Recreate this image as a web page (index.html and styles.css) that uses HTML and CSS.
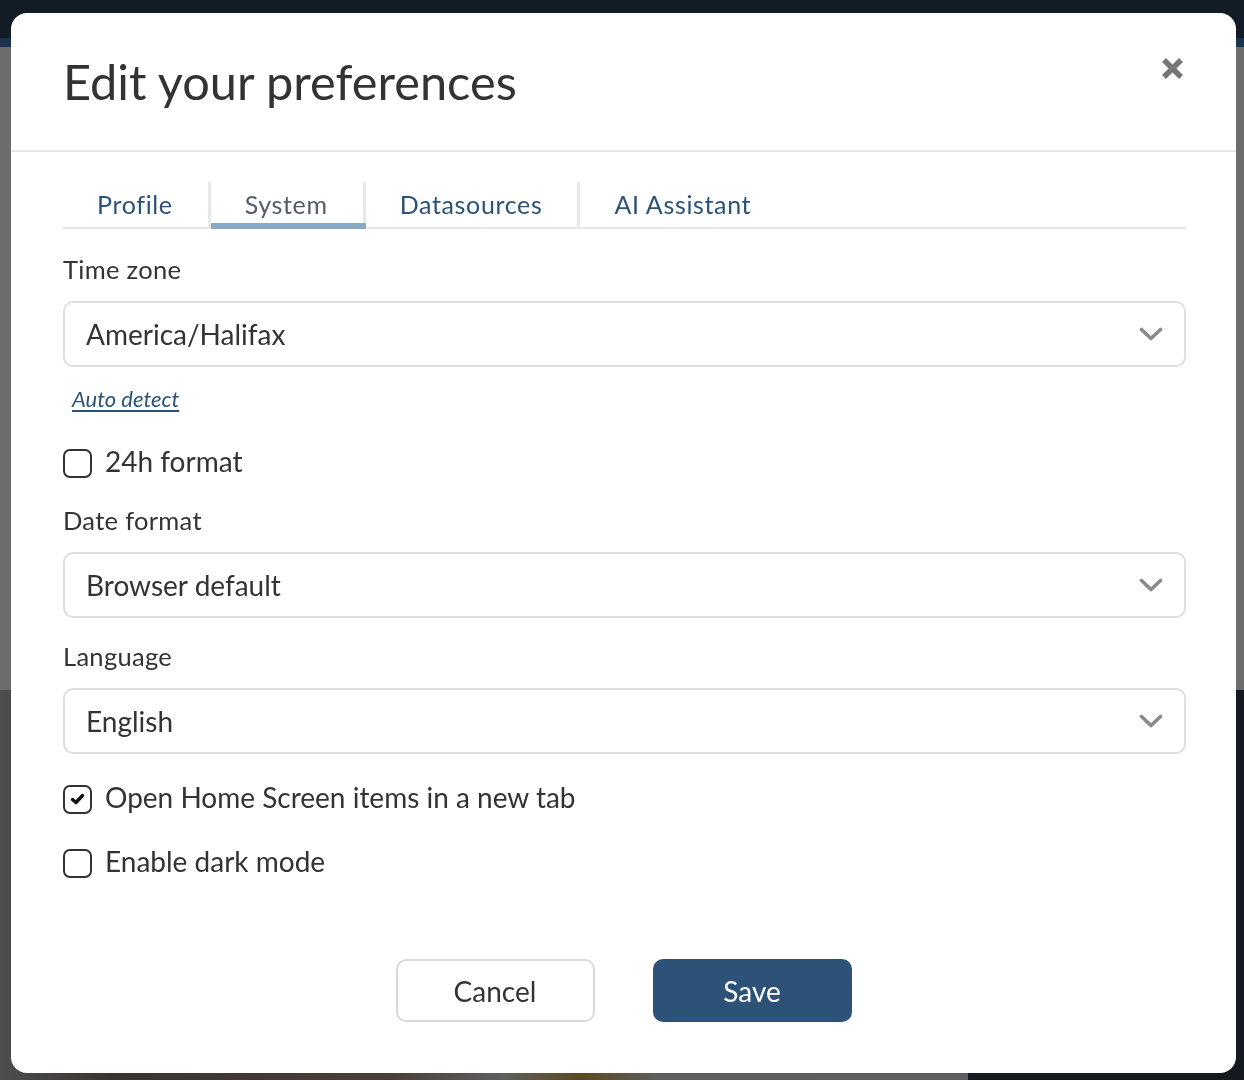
FILE: index.html
```html
<!DOCTYPE html>
<html lang="en">
<head>
<meta charset="utf-8">
<title>Edit your preferences</title>
<link rel="stylesheet" href="styles.css">
</head>
<body>
<div class="backdrop">
  <div class="bg-topbar"></div>
  <div class="bg-strip"></div>
  <div class="bg-main"></div>
  <div class="bg-bottom-left"></div>
  <div class="bg-bottom-right"></div>
</div>

<div class="modal" role="dialog" aria-labelledby="dlg-title">
  <header class="modal-header">
    <h1 id="dlg-title" class="modal-title">Edit your preferences</h1>
    <button class="close-btn" aria-label="Close">
      <svg width="23" height="23" viewBox="0 0 23 23"><path d="M3 3 L20 20 M20 3 L3 20" stroke="#767676" stroke-width="5.5" stroke-linecap="butt" fill="none"/></svg>
    </button>
  </header>

  <div class="modal-body">
    <nav class="tabs">
      <span class="tab">Profile</span>
      <span class="tab tab-active">System</span>
      <span class="tab">Datasources</span>
      <span class="tab tab-last">AI Assistant</span>
    </nav>

    <div class="field field-first">
      <div class="field-label">Time zone</div>
      <div class="select">
        <span class="select-value">America/Halifax</span>
        <svg class="chevron" width="24" height="15" viewBox="0 0 24 15"><path d="M2.5 2.5 L12 11.5 L21.5 2.5" stroke="#8a8a8a" stroke-width="3.6" fill="none" stroke-linecap="round" stroke-linejoin="round"/></svg>
      </div>
      <a class="link" href="#">Auto detect</a>
    </div>

    <label class="check-row check-24h">
      <span class="check-box"></span>
      <span class="check-label">24h format</span>
    </label>

    <div class="field field-date">
      <div class="field-label">Date format</div>
      <div class="select">
        <span class="select-value">Browser default</span>
        <svg class="chevron" width="24" height="15" viewBox="0 0 24 15"><path d="M2.5 2.5 L12 11.5 L21.5 2.5" stroke="#8a8a8a" stroke-width="3.6" fill="none" stroke-linecap="round" stroke-linejoin="round"/></svg>
      </div>
    </div>

    <div class="field">
      <div class="field-label">Language</div>
      <div class="select">
        <span class="select-value">English</span>
        <svg class="chevron" width="24" height="15" viewBox="0 0 24 15"><path d="M2.5 2.5 L12 11.5 L21.5 2.5" stroke="#8a8a8a" stroke-width="3.6" fill="none" stroke-linecap="round" stroke-linejoin="round"/></svg>
      </div>
    </div>

    <label class="check-row check-newtab">
      <span class="check-box checked">
        <svg width="17" height="14" viewBox="0 0 17 14"><path d="M3.5 7.5 L7 10.5 L13.5 3.5" stroke="#111" stroke-width="3.4" fill="none" stroke-linecap="round" stroke-linejoin="round"/></svg>
      </span>
      <span class="check-label">Open Home Screen items in a new tab</span>
    </label>

    <label class="check-row check-dark">
      <span class="check-box"></span>
      <span class="check-label">Enable dark mode</span>
    </label>
  </div>

  <footer class="modal-footer">
    <button class="btn btn-secondary">Cancel</button>
    <button class="btn btn-primary">Save</button>
  </footer>
</div>
</body>
</html>
```

FILE: styles.css
```css
* { box-sizing: border-box; }

html, body {
  margin: 0;
  padding: 0;
  width: 1244px;
  height: 1080px;
  overflow: hidden;
  font-family: "Lato", "Liberation Sans", sans-serif;
}

/* dimmed application behind the dialog */
.backdrop {
  display: grid;
  grid-template-columns: 968px 1fr;
  grid-template-rows: 38px 9px 643px 1fr;
  width: 1244px;
  height: 1080px;
}
.bg-topbar { grid-column: 1 / 3; background: #111c27; }
.bg-strip { grid-column: 1 / 3; background: #1c3350; }
.bg-main { grid-column: 1 / 3; background: #6c6c6c; }
.bg-bottom-left { background: linear-gradient(90deg, #4d4d4d 0, #3a3330 12%, #4a3f38 40%, #5e5e5e 52%, #5a4a22 60%, #5e5e5e 68%, #5f5f5f 100%); }
.bg-bottom-right { background: #151a20; }

/* dialog */
.modal {
  position: fixed;
  left: 11px;
  top: 13px;
  width: 1225px;
  height: 1060px;
  background: #fff;
  border-radius: 16px;
  display: flex;
  flex-direction: column;
  color: #333;
}

.modal-header {
  display: flex;
  justify-content: space-between;
  align-items: flex-start;
  padding: 38px 52px 39px 52px;
  border-bottom: 2px solid #e6e6e6;
}
.modal-title {
  margin: 0;
  font-size: 48.7px;
  line-height: 60px;
  font-weight: 400;
  color: #333;
}
.close-btn {
  margin-top: 6px;
  padding: 0;
  border: 0;
  background: none;
  width: 23px;
  height: 23px;
  display: flex;
}

.modal-body {
  padding: 30px 50px 0 52px;
  display: flex;
  flex-direction: column;
}

/* tabs */
.tabs {
  display: flex;
  border-bottom: 2px solid #e8e8e8;
  height: 47px;
}
.tab {
  position: relative;
  padding: 0 35px 0 34px;
  font-size: 25px;
  letter-spacing: 0.65px;
  line-height: 45px;
  color: #2b5278;
  border-right: 3px solid #e8e8e8;
}
.tab-last { border-right: 0; }
.tab-active { color: #525c6a; }
.tab-active::after {
  content: "";
  position: absolute;
  left: 0;
  right: -3px;
  bottom: -2px;
  height: 6px;
  background: #8aa9c2;
}

/* fields */
.field { display: flex; flex-direction: column; margin-top: 23px; }
.field-first { margin-top: 25px; }
.field-date { margin-top: 27px; }
.field-label {
  font-size: 25.5px;
  letter-spacing: 0.3px;
  line-height: 30px;
  color: #333;
  margin-bottom: 17px;
}
.select {
  display: flex;
  align-items: center;
  justify-content: space-between;
  height: 66px;
  border: 2px solid #dcdfe3;
  border-radius: 10px;
  padding: 0 21px 0 21px;
}
.select-value {
  font-size: 28px;
  line-height: 62px;
  color: #333;
}
.chevron { margin-top: 1px; }

.link {
  align-self: flex-start;
  margin: 18px 0 0 9px;
  font-size: 22px;
  line-height: 28px;
  font-style: italic;
  color: #2b5278;
  text-decoration: underline;
  text-underline-offset: 3px;
}

/* checkboxes */
.check-row {
  display: flex;
  align-items: center;
  gap: 13px;
  height: 34px;
}
.check-24h { margin-top: 31px; }
.check-newtab { margin-top: 26px; }
.check-dark { margin-top: 30px; }
.check-box {
  width: 29px;
  height: 29px;
  flex: none;
  border: 2px solid #333;
  border-radius: 7px;
  margin-top: 4px;
  display: flex;
  align-items: center;
  justify-content: center;
}
.check-label {
  font-size: 28px;
  line-height: 34px;
  color: #333;
}

/* footer */
.modal-footer {
  margin-top: auto;
  display: flex;
  justify-content: center;
  gap: 58px;
  padding: 0 0 51px 0;
}
.btn {
  width: 199px;
  height: 63px;
  border-radius: 10px;
  font-family: "Lato", "Liberation Sans", sans-serif;
  font-size: 28px;
  padding: 0;
}
.btn-secondary {
  background: #fff;
  border: 2px solid #d6d9de;
  color: #333;
}
.btn-primary {
  background: #2c5277;
  border: 0;
  color: #fff;
}
```
